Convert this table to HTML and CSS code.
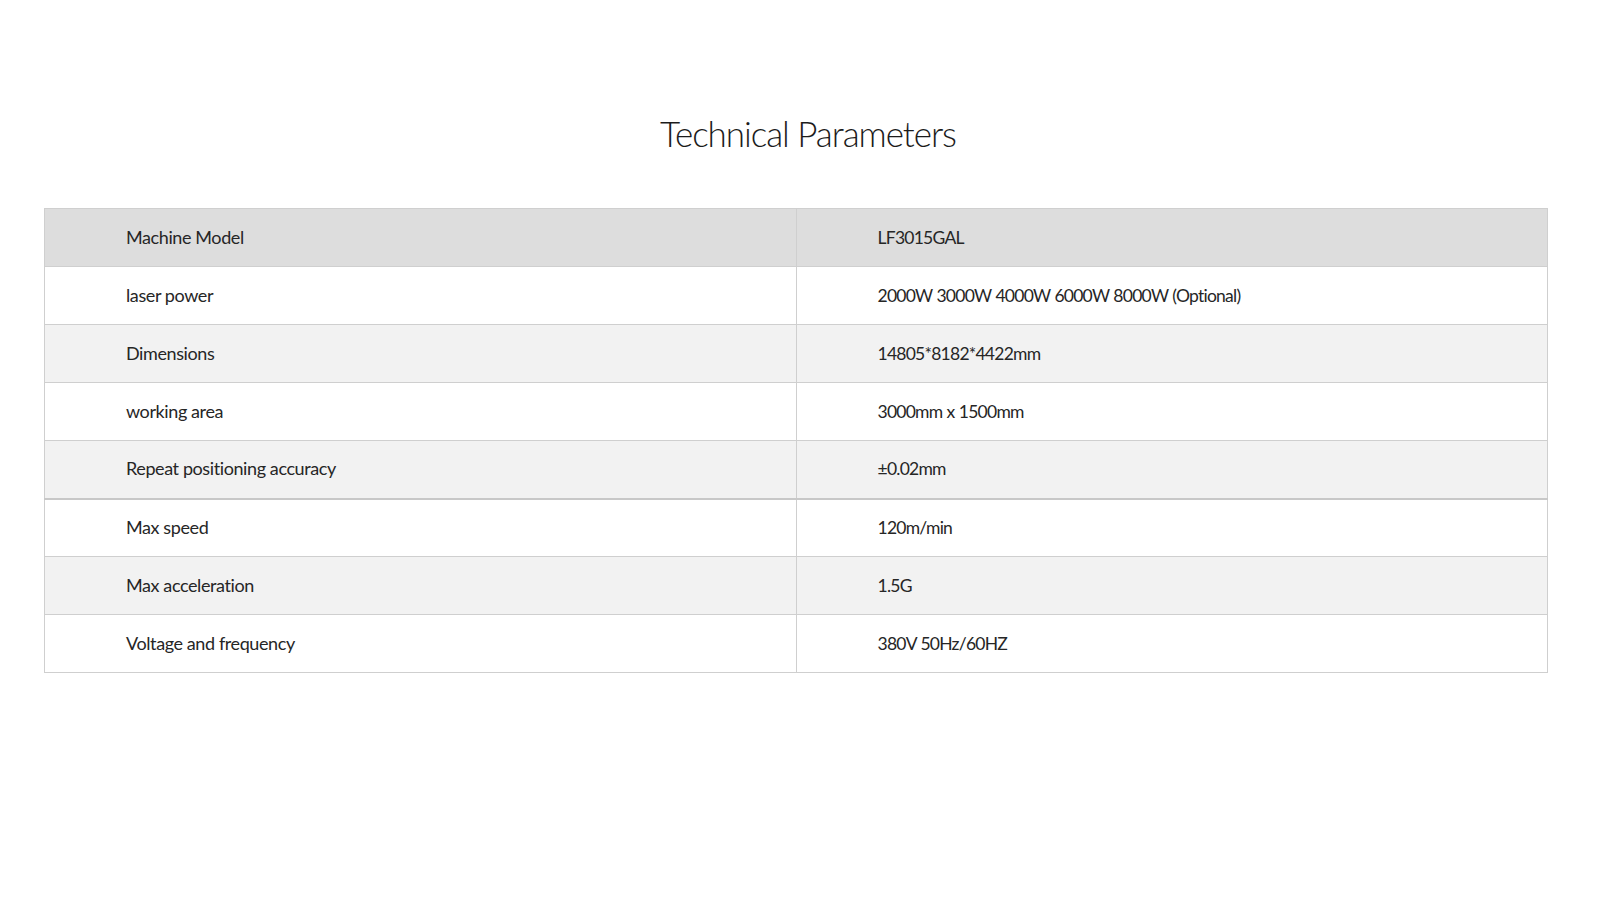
FILE: index.html
```html
<!DOCTYPE html>
<html lang="en">
<head>
<meta charset="utf-8">
<title>Technical Parameters</title>
<link rel="stylesheet" href="styles.css">
</head>
<body>
<main class="page">
  <h1 class="title">Technical Parameters</h1>
  <table class="params">
    <tbody>
      <tr class="head"><td>Machine Model</td><td class="val">LF3015GAL</td></tr>
      <tr class="white"><td>laser power</td><td class="val">2000W 3000W 4000W 6000W 8000W (Optional)</td></tr>
      <tr class="grey"><td>Dimensions</td><td class="val">14805*8182*4422mm</td></tr>
      <tr class="white"><td>working area</td><td class="val">3000mm x 1500mm</td></tr>
      <tr class="grey thick"><td>Repeat positioning accuracy</td><td class="val">±0.02mm</td></tr>
      <tr class="white"><td>Max speed</td><td class="val">120m/min</td></tr>
      <tr class="grey"><td>Max acceleration</td><td class="val">1.5G</td></tr>
      <tr class="white"><td>Voltage and frequency</td><td class="val">380V 50Hz/60HZ</td></tr>
    </tbody>
  </table>
</main>
</body>
</html>
```
FILE: styles.css
```css
html, body {
  margin: 0;
  padding: 0;
  background: #ffffff;
}
body {
  font-family: Lato, "Open Sans", "Liberation Sans", sans-serif;
  color: #262626;
}
.page {
  padding: 112px 52px 0 44px;
  display: flex;
  flex-direction: column;
  align-items: stretch;
}
.title {
  margin: 0 0 54px 0;
  text-align: center;
  font-weight: 300;
  font-size: 35px;
  letter-spacing: -1.05px;
  line-height: 42px;
  color: #1c1c1c;
  padding-left: 24px;
}
.params {
  width: 1504px;
  border-collapse: collapse;
  table-layout: fixed;
  border: 1px solid #cfcfcf;
}
.params td {
  height: 58px;
  padding: 0 0 2px 81px;
  border: 1px solid #cfcfcf;
  font-size: 18px;
  letter-spacing: -0.4px;
  vertical-align: middle;
  box-sizing: border-box;
}
.params td.val {
  font-size: 17.5px;
  letter-spacing: -0.75px;
  word-spacing: 0.5px;
  padding-bottom: 1px;
}
.params tr.head td { background: #dddddd; }
.params tr.white td { background: #ffffff; }
.params tr.grey td { background: #f2f2f2; }
.params tr.thick td { border-bottom: 2px solid #c8c8c8; }
```
